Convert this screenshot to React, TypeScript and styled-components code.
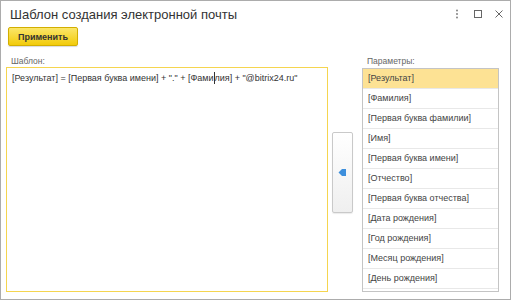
import React from 'react';
import styled, { createGlobalStyle } from 'styled-components';

const GlobalStyle = createGlobalStyle`
	html, body {
		margin: 0;
		padding: 0;
		background: #ffffff;
	}
	body {
		font-family: 'Liberation Sans', Arial, sans-serif;
		color: #333333;
	}
`;

const params = [
	'[Результат]',
	'[Фамилия]',
	'[Первая буква фамилии]',
	'[Имя]',
	'[Первая буква имени]',
	'[Отчество]',
	'[Первая буква отчества]',
	'[Дата рождения]',
	'[Год рождения]',
	'[Месяц рождения]',
	'[День рождения]'
];

export default function App() {
	return (
		<>
			<GlobalStyle />
			<Window>
				<Header>
					<Title>Шаблон создания электронной почты</Title>
					<HeaderIcons>
						<IconButton title="Ещё">
							<svg width="10" height="12" viewBox="0 0 10 12">
								<circle cx="5" cy="2.5" r="0.9" fill="#777" />
								<circle cx="5" cy="6" r="0.9" fill="#777" />
								<circle cx="5" cy="9.5" r="0.9" fill="#777" />
							</svg>
						</IconButton>
						<IconButton title="Развернуть">
							<svg width="10" height="10" viewBox="0 0 10 10">
								<rect x="1.5" y="1.5" width="7" height="7" fill="none" stroke="#666" strokeWidth="1" />
							</svg>
						</IconButton>
						<IconButton title="Закрыть">
							<svg width="10" height="10" viewBox="0 0 10 10">
								<path d="M1.5 1.5 L8.5 8.5 M8.5 1.5 L1.5 8.5" stroke="#666" strokeWidth="1" />
							</svg>
						</IconButton>
					</HeaderIcons>
				</Header>
				<Toolbar>
					<ApplyButton>Применить</ApplyButton>
				</Toolbar>
				<Body>
					<Column>
						<Label>Шаблон:</Label>
						<Editor>
							[Результат] = [Первая буква имени] + "." + [Фами
							<Caret />
							лия] + "@bitrix24.ru"
						</Editor>
					</Column>
					<Middle>
						<MoveButton title="Вставить">
							<svg width="9" height="9" viewBox="0 0 9 9">
								<path d="M0.5 4.5 L4 1 H8 V8 H4 Z" fill="#3d8fdc" />
							</svg>
						</MoveButton>
					</Middle>
					<Column>
						<Label>Параметры:</Label>
						<List>
							{params.map((p, i) => (
								<Row key={p} selected={i === 0}>
									{p}
								</Row>
							))}
						</List>
					</Column>
				</Body>
			</Window>
		</>
	);
}

const Window = styled.div`
	box-sizing: border-box;
	width: 511px;
	height: 300px;
	border: 1px solid #acacac;
	display: flex;
	flex-direction: column;
	background: #ffffff;
	overflow: hidden;
`;

const Header = styled.div`
	display: flex;
	align-items: center;
	height: 26px;
	padding: 0 6px 0 9px;
`;

const Title = styled.div`
	flex: 1;
	font-size: 13px;
	color: #333;
	white-space: nowrap;
`;

const HeaderIcons = styled.div`
	display: flex;
	align-items: center;
	gap: 11px;
`;

const IconButton = styled.div`
	display: flex;
	align-items: center;
	justify-content: center;
	width: 10px;
	height: 12px;
`;

const Toolbar = styled.div`
	display: flex;
	height: 20px;
	padding: 0 0 0 7px;
`;

const ApplyButton = styled.button`
	box-sizing: border-box;
	width: 70px;
	height: 19px;
	padding: 0;
	border: 1px solid #d2ae00;
	border-radius: 2px;
	background: linear-gradient(#fbe66a, #f2cb0a);
	font-family: 'Liberation Sans', Arial, sans-serif;
	font-size: 9px;
	font-weight: bold;
	color: #333;
	box-shadow: 0 1px 1px rgba(0, 0, 0, 0.15);
`;

const Body = styled.div`
	flex: 1;
	display: grid;
	grid-template-columns: 322px 34px 137px;
	padding: 9px 12px 7px 5px;
	min-height: 0;
`;

const Column = styled.div`
	display: flex;
	flex-direction: column;
	min-height: 0;
`;

const Label = styled.div`
	font-size: 8.5px;
	color: #666;
	height: 11px;
	line-height: 11px;
	padding-left: 5px;
`;

const Editor = styled.div`
	flex: 1;
	box-sizing: border-box;
	border: 1px solid #f5d54f;
	padding: 4px 5px;
	font-size: 9px;
	line-height: 12px;
	color: #333;
	white-space: nowrap;
	display: flex;
	align-items: flex-start;
`;

const Caret = styled.span`
	display: inline-block;
	width: 1px;
	height: 12px;
	background: #333;
`;

const Middle = styled.div`
	display: flex;
	justify-content: center;
	padding-top: 76px;
	padding-left: 3px;
	padding-right: 8px;
`;

const MoveButton = styled.div`
	box-sizing: border-box;
	width: 21px;
	height: 81px;
	border: 1px solid #c9c9c9;
	border-radius: 2px;
	background: linear-gradient(#ffffff, #efefef);
	display: flex;
	align-items: center;
	justify-content: center;
	box-shadow: 0 1px 1px rgba(0, 0, 0, 0.08);
`;

const List = styled.div`
	flex: 1;
	box-sizing: border-box;
	border: 1px solid #c4c4c4;
	margin-top: 1px;
	overflow: hidden;
`;

const Row = styled.div<{ selected?: boolean }>`
	height: 20px;
	box-sizing: border-box;
	border-bottom: 1px solid #e8e8e8;
	padding-left: 5px;
	font-size: 9px;
	line-height: 19px;
	color: #444;
	white-space: nowrap;
	background: ${({ selected }) => (selected ? '#fde294' : 'transparent')};
`;
